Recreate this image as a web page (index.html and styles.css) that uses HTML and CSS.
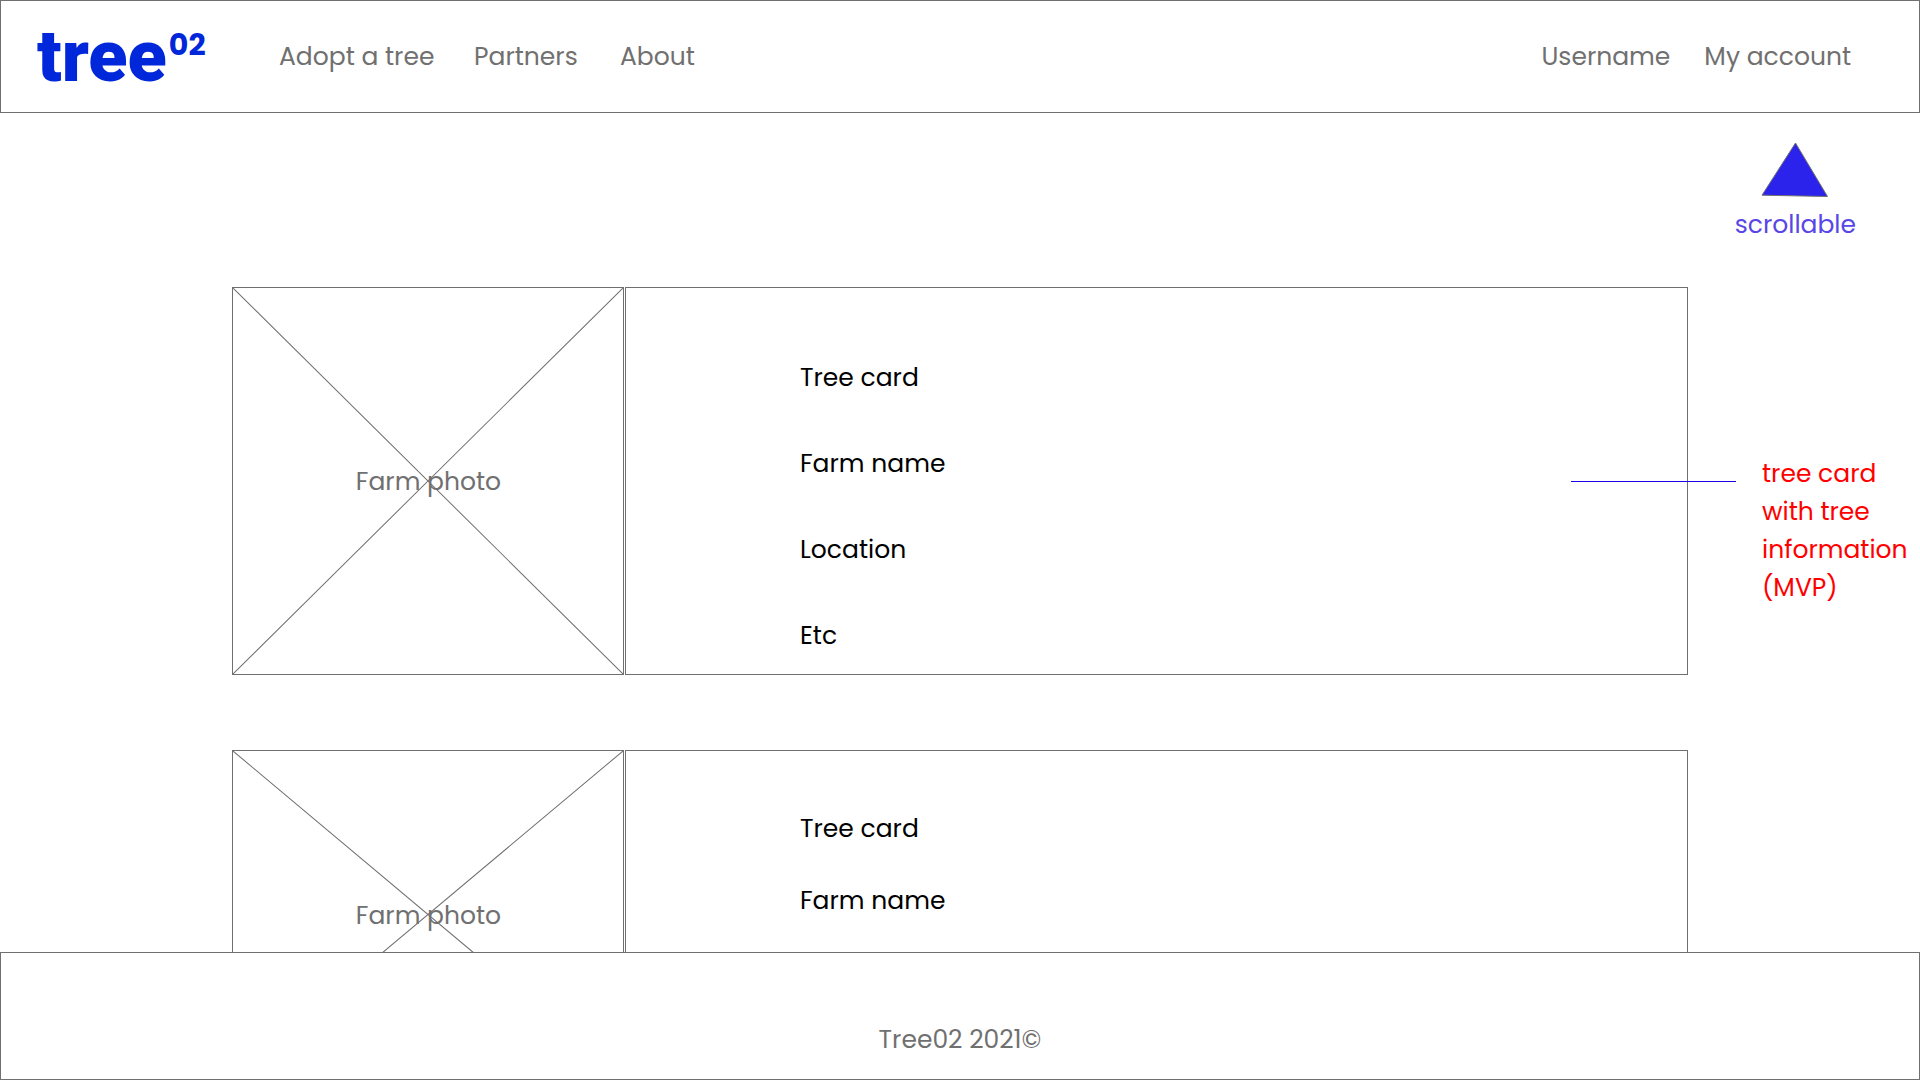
FILE: index.html
```html
<!DOCTYPE html>
<html lang="en">
<head>
  <meta charset="utf-8">
  <title>tree02</title>
  <link rel="stylesheet" href="styles.css">
</head>
<body>
  <header class="header">
    <a class="logo" href="#">tree<span class="logo-sup">02</span></a>
    <nav class="nav">
      <a href="#">Adopt a tree</a>
      <a href="#">Partners</a>
      <a href="#">About</a>
    </nav>
    <nav class="account">
      <a href="#">Username</a>
      <a href="#">My account</a>
    </nav>
  </header>

  <aside class="scroll-hint">
    <svg class="scroll-arrow" width="68" height="56" viewBox="0 0 68 56" aria-hidden="true">
      <path d="M34.5 1 L66.5 54.5 L1 53.2 Z" fill="#2b22ec" stroke="#707070" stroke-width="1"/>
    </svg>
    <span>scrollable</span>
  </aside>

  <main class="cards">
    <article class="card">
      <div class="photo">
        <svg class="cross" viewBox="0 0 100 100" preserveAspectRatio="none" aria-hidden="true">
          <path d="M0 0 L100 100 M100 0 L0 100"/>
        </svg>
        <span>Farm photo</span>
      </div>
      <ul class="info">
        <li>Tree card</li>
        <li>Farm name</li>
        <li>Location</li>
        <li>Etc</li>
      </ul>
      <div class="note-line"></div>
      <p class="note">tree card<br>with tree<br>information<br>(MVP)</p>
    </article>

    <article class="card">
      <div class="photo">
        <svg class="cross" viewBox="0 0 100 100" preserveAspectRatio="none" aria-hidden="true">
          <path d="M0 0 L100 100 M100 0 L0 100"/>
        </svg>
        <span>Farm photo</span>
      </div>
      <ul class="info info-compact">
        <li>Tree card</li>
        <li>Farm name</li>
        <li>Location</li>
        <li>Etc</li>
      </ul>
    </article>
  </main>

  <footer class="footer">Tree02 2021©</footer>
</body>
</html>
```
FILE: styles.css
```css
* {
  box-sizing: border-box;
}

body {
  margin: 0;
  background: #fff;
  color: #707070;
  font-family: Poppins, Inter, sans-serif;
  font-size: 25px;
  font-weight: 400;
  line-height: 38px;
}

a {
  color: inherit;
  text-decoration: none;
  white-space: nowrap;
}

.header {
  display: flex;
  align-items: center;
  height: 113px;
  padding: 0 68px 0 36px;
  border: 1px solid #707070;
}

.logo {
  display: flex;
  align-items: flex-start;
  width: 242px;
  color: #0027d9;
  font-family: Roboto, sans-serif;
  font-size: 72px;
  font-weight: 900;
  line-height: 72px;
}

.logo-sup {
  padding-left: 2px;
  font-family: Poppins, Roboto, sans-serif;
  font-size: 30px;
  font-weight: 700;
  line-height: 48px;
}

.nav {
  display: grid;
  grid-template-columns: 195px 146px auto;
}

.account {
  display: flex;
  gap: 34px;
  margin-left: auto;
}

.scroll-hint {
  position: absolute;
  top: 142px;
  right: 64px;
  display: flex;
  flex-direction: column;
  align-items: center;
  gap: 8px;
  color: #5846e6;
}

.scroll-arrow {
  display: block;
}

.cards {
  display: flex;
  flex-direction: column;
  gap: 75px;
  padding: 174px 232px 0;
}

.card {
  position: relative;
  display: grid;
  grid-template-columns: 392px 1fr;
  gap: 1px;
}

.photo {
  position: relative;
  display: flex;
  align-items: center;
  justify-content: center;
  padding: 2px 0 0 1px;
  border: 1px solid #707070;
}

.cross {
  position: absolute;
  inset: 0;
  width: 100%;
  height: 100%;
  stroke: #707070;
  stroke-width: 1px;
}

.cross path {
  vector-effect: non-scaling-stroke;
}

.info {
  display: flex;
  flex-direction: column;
  gap: 48px;
  margin: 0;
  padding: 71px 0 19px 174px;
  border: 1px solid #707070;
  color: #000;
  list-style: none;
}

.info-compact {
  gap: 34px;
  padding-top: 59px;
  padding-bottom: 14px;
}

.note-line {
  position: absolute;
  top: 194px;
  right: -48px;
  width: 165px;
  height: 1px;
  background: #1a00e6;
}

.note {
  position: absolute;
  top: 168px;
  left: calc(100% + 74px);
  margin: 0;
  color: #f00;
}

.footer {
  position: fixed;
  right: 0;
  bottom: 0;
  left: 0;
  height: 128px;
  padding-top: 68px;
  border: 1px solid #707070;
  background: #fff;
  text-align: center;
}
```
